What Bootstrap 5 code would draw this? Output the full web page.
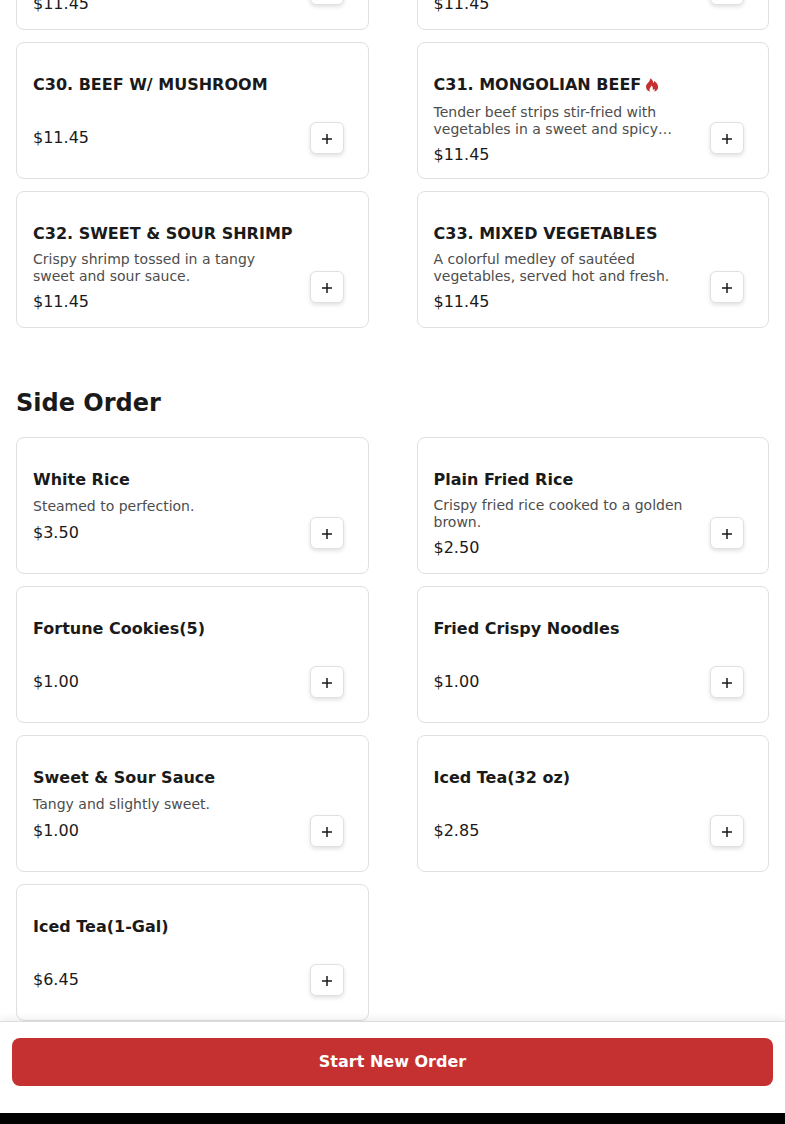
<!DOCTYPE html>
<html lang="en">
<head>
<meta charset="utf-8">
<meta name="viewport" content="width=device-width, initial-scale=1">
<title>Menu</title>
<link href="https://cdn.jsdelivr.net/npm/bootstrap@5.3.0/dist/css/bootstrap.min.css" rel="stylesheet">
<style>
body { font-family: "DejaVu Sans", sans-serif; font-size: 16px; line-height: 24px; color: #1a1a1a; background: #fff; }
.menu-grid { display: grid; grid-template-columns: 1fr 1fr; gap: 12px 48px; }
.section-title { font-size: 24px; line-height: 36px; margin: 57px 0 16px; }
.dish { height: 137px; padding: 30px 24px 24px 16px; gap: 12px; border: 1px solid #e0e0e0; border-radius: 8px; }
.dish-name { font-size: 16px; line-height: 24px; min-height: 24px; margin-bottom: 5px; }
.dish-name.spicy { margin-bottom: 7px; }
.dish-note { min-height: 19px; margin-bottom: 5px; font-size: 14px; line-height: 17px; color: #4d4d4d; }
.dish-note.two-line { min-height: 34px; }
.add-btn { width: 34px; height: 32px; padding: 2px 0 0; border: 1px solid #e0e0e0; border-radius: 6px; background: #fff; box-shadow: 0 2px 4px rgba(0,0,0,.12); }
.order-bar { padding: 16px 12px 27px; border-top: 1px solid #dcdcdc; box-shadow: 0 -2px 8px rgba(0,0,0,.08); }
.order-btn, .order-btn:hover { height: 48px; border: 0; border-radius: 8px; background: #c53030; color: #fff; }
.bottom-strip { height: 11px; background: #000; }
</style>
</head>
<body>
<svg class="d-none" aria-hidden="true">
  <symbol id="plus" viewBox="0 0 12 12"><path d="M6 1v10M1 6h10" stroke="#1a1a1a" stroke-width="1.5" fill="none"/></symbol>
</svg>
<div class="d-flex flex-column vh-100 overflow-hidden">
  <main class="flex-grow-1 d-flex flex-column justify-content-end overflow-hidden px-3" style="min-height:0">
    <section class="menu-grid flex-shrink-0">
      <article class="dish d-flex"><div class="flex-fill"><h3 class="dish-name"></h3><div class="dish-note two-line"></div><div>$11.45</div></div><button class="add-btn d-flex align-items-center justify-content-center align-self-end flex-shrink-0" aria-label="Add"><svg width="12" height="12"><use href="#plus"/></svg></button></article>
      <article class="dish d-flex"><div class="flex-fill"><h3 class="dish-name"></h3><div class="dish-note two-line"></div><div>$11.45</div></div><button class="add-btn d-flex align-items-center justify-content-center align-self-end flex-shrink-0" aria-label="Add"><svg width="12" height="12"><use href="#plus"/></svg></button></article>
      <article class="dish d-flex"><div class="flex-fill"><h3 class="dish-name fw-bold">C30. BEEF W/ MUSHROOM</h3><div class="dish-note"></div><div>$11.45</div></div><button class="add-btn d-flex align-items-center justify-content-center align-self-end flex-shrink-0" aria-label="Add"><svg width="12" height="12"><use href="#plus"/></svg></button></article>
      <article class="dish d-flex"><div class="flex-fill"><h3 class="dish-name spicy fw-bold d-flex align-items-center">C31. MONGOLIAN BEEF<svg class="ms-1" width="14" height="14" viewBox="0 0 14 14" aria-hidden="true"><path fill="#c53030" d="M5.300.3C7.200 1.500 8.400 3.300 8.300 5.300C8.900 4.800 9.200 4 9.200 3C11.600 4.700 13.200 6.900 13.100 9.200C13 11.600 11.200 13.200 8.700 13.600C9.700 12.900 10 12 9.800 11C9.200 11.700 8.500 11.900 7.700 11.700C8.200 10.200 7.600 8.500 6.200 7.600C6.200 9.600 4.300 10.400 4.500 12.100C4.600 12.700 4.800 13.100 5.200 13.500C2.600 13 1 11.200 1 8.700C1 5.500 5.200 4.100 5.300.3Z"/></svg></h3><div class="dish-note">Tender beef strips stir-fried with vegetables in a sweet and spicy…</div><div>$11.45</div></div><button class="add-btn d-flex align-items-center justify-content-center align-self-end flex-shrink-0" aria-label="Add"><svg width="12" height="12"><use href="#plus"/></svg></button></article>
      <article class="dish d-flex"><div class="flex-fill"><h3 class="dish-name fw-bold">C32. SWEET &amp; SOUR SHRIMP</h3><div class="dish-note">Crispy shrimp tossed in a tangy sweet and sour sauce.</div><div>$11.45</div></div><button class="add-btn d-flex align-items-center justify-content-center align-self-end flex-shrink-0" aria-label="Add"><svg width="12" height="12"><use href="#plus"/></svg></button></article>
      <article class="dish d-flex"><div class="flex-fill"><h3 class="dish-name fw-bold">C33. MIXED VEGETABLES</h3><div class="dish-note">A colorful medley of sautéed vegetables, served hot and fresh.</div><div>$11.45</div></div><button class="add-btn d-flex align-items-center justify-content-center align-self-end flex-shrink-0" aria-label="Add"><svg width="12" height="12"><use href="#plus"/></svg></button></article>
    </section>
    <h2 class="section-title fw-bold flex-shrink-0">Side Order</h2>
    <section class="menu-grid flex-shrink-0">
      <article class="dish d-flex"><div class="flex-fill"><h3 class="dish-name fw-bold">White Rice</h3><div class="dish-note d-flex align-items-center">Steamed to perfection.</div><div>$3.50</div></div><button class="add-btn d-flex align-items-center justify-content-center align-self-end flex-shrink-0" aria-label="Add"><svg width="12" height="12"><use href="#plus"/></svg></button></article>
      <article class="dish d-flex"><div class="flex-fill"><h3 class="dish-name fw-bold">Plain Fried Rice</h3><div class="dish-note">Crispy fried rice cooked to a golden brown.</div><div>$2.50</div></div><button class="add-btn d-flex align-items-center justify-content-center align-self-end flex-shrink-0" aria-label="Add"><svg width="12" height="12"><use href="#plus"/></svg></button></article>
      <article class="dish d-flex"><div class="flex-fill"><h3 class="dish-name fw-bold">Fortune Cookies(5)</h3><div class="dish-note"></div><div>$1.00</div></div><button class="add-btn d-flex align-items-center justify-content-center align-self-end flex-shrink-0" aria-label="Add"><svg width="12" height="12"><use href="#plus"/></svg></button></article>
      <article class="dish d-flex"><div class="flex-fill"><h3 class="dish-name fw-bold">Fried Crispy Noodles</h3><div class="dish-note"></div><div>$1.00</div></div><button class="add-btn d-flex align-items-center justify-content-center align-self-end flex-shrink-0" aria-label="Add"><svg width="12" height="12"><use href="#plus"/></svg></button></article>
      <article class="dish d-flex"><div class="flex-fill"><h3 class="dish-name fw-bold">Sweet &amp; Sour Sauce</h3><div class="dish-note d-flex align-items-center">Tangy and slightly sweet.</div><div>$1.00</div></div><button class="add-btn d-flex align-items-center justify-content-center align-self-end flex-shrink-0" aria-label="Add"><svg width="12" height="12"><use href="#plus"/></svg></button></article>
      <article class="dish d-flex"><div class="flex-fill"><h3 class="dish-name fw-bold">Iced Tea(32 oz)</h3><div class="dish-note"></div><div>$2.85</div></div><button class="add-btn d-flex align-items-center justify-content-center align-self-end flex-shrink-0" aria-label="Add"><svg width="12" height="12"><use href="#plus"/></svg></button></article>
      <article class="dish d-flex"><div class="flex-fill"><h3 class="dish-name fw-bold">Iced Tea(1-Gal)</h3><div class="dish-note"></div><div>$6.45</div></div><button class="add-btn d-flex align-items-center justify-content-center align-self-end flex-shrink-0" aria-label="Add"><svg width="12" height="12"><use href="#plus"/></svg></button></article>
    </section>
  </main>
  <footer class="order-bar position-relative bg-white flex-shrink-0">
    <button class="btn order-btn w-100 fw-bold">Start New Order</button>
  </footer>
  <div class="bottom-strip flex-shrink-0"></div>
</div>
<script src="https://cdn.jsdelivr.net/npm/bootstrap@5.3.0/dist/js/bootstrap.bundle.min.js"></script>
</body>
</html>
